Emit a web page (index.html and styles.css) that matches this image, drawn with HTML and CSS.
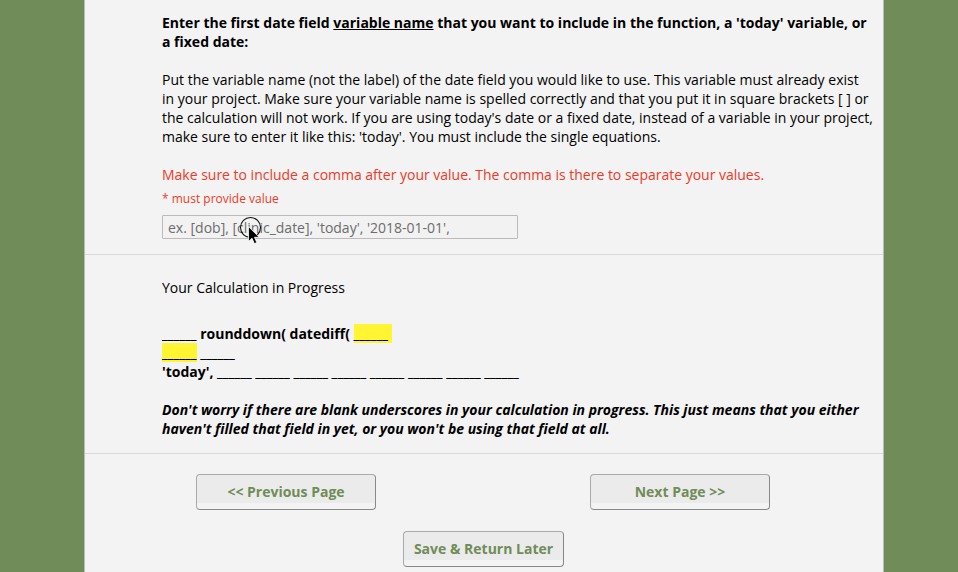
FILE: index.html
```html
<!DOCTYPE html>
<html lang="en">
<head>
  <meta charset="UTF-8" />
  <title>Calculation Builder</title>
  <link rel="stylesheet" href="styles.css">
</head>
<body>
  <form class="survey">
    <section class="question">
      <p class="bold">Enter the first date field <u>variable name</u> that you want to include in the function, a 'today' variable, or<br>a fixed date:</p>
      <p>Put the variable name (not the label) of the date field you would like to use. This variable must already exist<br>in your project. Make sure your variable name is spelled correctly and that you put it in square brackets [ ] or<br>the calculation will not work. If you are using today's date or a fixed date, instead of a variable in your project,<br>make sure to enter it like this: 'today'. You must include the single equations.</p>
      <p class="warning">Make sure to include a comma after your value. The comma is there to separate your values.</p>
      <div class="required">* must provide value</div>
      <div class="field">
        <input type="text" placeholder="ex. [dob], [clinic_date], 'today', '2018-01-01'," />
        <svg class="cursor" width="26" height="32" viewBox="0 0 26 32">
          <circle cx="12.5" cy="12.5" r="10" fill="none" stroke="#111" stroke-width="1.1" />
          <path d="M10.5 11.5v15l3.500-3.300 2.400 5.400 2.400-1-2.300-5.300h4.700z" fill="#000" stroke="#fff" stroke-width="0.8" />
        </svg>
      </div>
    </section>

    <section class="progress">
      <p>Your Calculation in Progress</p>
      <p class="bold calc">______ rounddown( datediff( <mark>______&nbsp;</mark><br><mark>______</mark> ______<br>'today', ______ ______ ______ ______ ______ ______ ______ ______</p>
      <p class="bold note">Don't worry if there are blank underscores in your calculation in progress. This just means that you either<br>haven't filled that field in yet, or you won't be using that field at all.</p>
    </section>

    <div class="buttons">
      <button type="button">&lt;&lt; Previous Page</button>
      <button type="button">Next Page &gt;&gt;</button>
    </div>
    <div class="save">
      <button type="button">Save &amp; Return Later</button>
    </div>
  </form>
</body>
</html>
```
FILE: styles.css
```css
body {
  margin: 0;
  height: 572px;
  overflow: hidden;
  background: #708c58;
  font-family: "Open Sans", sans-serif;
  font-size: 14px;
  line-height: 19px;
  color: #000;
}
.survey {
  box-sizing: border-box;
  width: 800px;
  height: 572px;
  margin-left: 84px;
  background: #f3f3f3;
  border-left: 1px solid #bbb;
  border-right: 1px solid #bbb;
}
p {
  margin: 0 0 19px;
  white-space: nowrap;
}
.bold {
  font-weight: bold;
}
.question {
  box-sizing: border-box;
  height: 255px;
  padding: 13px 0 0 77px;
  border-bottom: 1px solid #d9d9d9;
}
.warning {
  margin-bottom: 5px;
  color: #ee3a28;
  letter-spacing: -0.01px;
}
.required {
  font-size: 12px;
  color: #ee3a28;
}
.field {
  position: relative;
  width: 356px;
  margin-top: 7px;
}
.field input {
  display: block;
  box-sizing: border-box;
  width: 356px;
  height: 24px;
  padding: 1px 5px;
  border: 1px solid #bbb;
  border-radius: 1px;
  background: #f2f2f2;
  font: 14px "Open Sans", sans-serif;
}
.field input::placeholder {
  color: #6c6c6c;
}
.cursor {
  position: absolute;
  left: 76px;
  top: 0;
}
.progress {
  box-sizing: border-box;
  height: 199px;
  padding: 23px 0 0 77px;
  border-bottom: 1px solid #d9d9d9;
}
.progress p:first-child {
  margin-bottom: 27px;
}
mark {
  background: #fff532;
}
.note {
  font-style: italic;
  letter-spacing: -0.01px;
}
button {
  height: 36px;
  padding: 0 0 2px;
  border: 1px solid;
  border-color: #aaa #888 #888 #aaa;
  border-radius: 4px;
  background: linear-gradient(#ebebeb 28px, #f3f3f3 28px);
  color: #708c58;
  font: bold 14px "Open Sans", sans-serif;
}
.buttons {
  display: flex;
  gap: 214px;
  padding: 20px 0 0 111px;
}
.buttons button {
  width: 180px;
}
.save {
  padding: 21px 0 0 318px;
}
.save button {
  width: 161px;
}
```
